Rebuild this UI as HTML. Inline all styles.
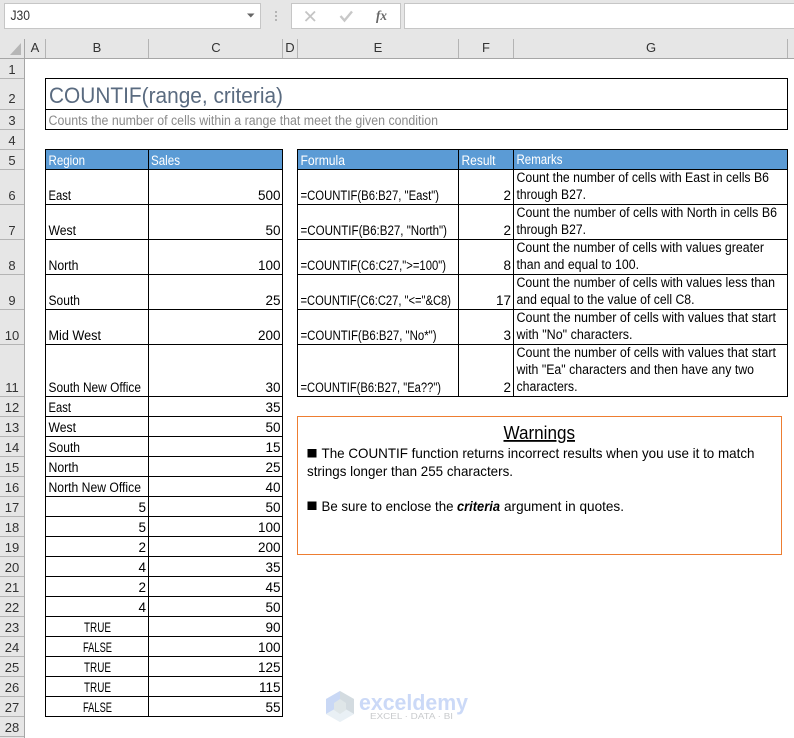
<!DOCTYPE html>
<html><head><meta charset="utf-8"><style>
html,body{margin:0;padding:0;background:#fff}
svg{display:block}
text{font-family:"Liberation Sans",sans-serif;font-size:13.5px;fill:#000}
.h text{fill:#333;font-size:13px}
.w text{fill:#fff}
</style></head><body>
<svg xmlns="http://www.w3.org/2000/svg" width="794" height="738" viewBox="0 0 794 738">
<rect width="794" height="738" fill="#fff"/>
<rect width="794" height="58" fill="#e6e6e6"/>
<rect y="58" width="24" height="680" fill="#e6e6e6"/>
<!-- top bars -->
<rect x="4.5" y="3.5" width="256" height="25" fill="#fff" stroke="#c6c6c6"/>
<text x="10.5" y="20" textLength="19.5" lengthAdjust="spacingAndGlyphs" style="fill:#333">J30</text>
<path d="M247 13.5h7.5l-3.7 4z" fill="#666"/>
<g fill="#b4b4b4"><rect x="275" y="11" width="2" height="2"/><rect x="275" y="15" width="2" height="2"/><rect x="275" y="19" width="2" height="2"/></g>
<rect x="291.5" y="3.5" width="109" height="25" fill="#fff" stroke="#c6c6c6"/>
<rect x="404.5" y="3.5" width="390" height="25" fill="#fff" stroke="#c6c6c6"/>
<path d="M305.5 11.500l9.500 9.500M315 11.500l-9.500 9.500" stroke="#c4c4c4" stroke-width="1.800" fill="none"/>
<path d="M340.500 16l4 4.500l7.500-9" stroke="#c8c8c8" stroke-width="2.400" fill="none"/>
<text x="376" y="20" textLength="11" lengthAdjust="spacingAndGlyphs" style="font-family:'Liberation Serif',serif;font-style:italic;font-weight:bold;font-size:14px;fill:#666">fx</text>
<!-- headers -->
<path d="M10 55h11V43z" fill="#b6b6b6"/>
<g stroke="#b4b4b4" stroke-width="1" fill="none">
<path d="M45.500 39v19M148.500 39v19M282.500 39v19M297.500 39v19M458.500 39v19M513.500 39v19M787.500 39v19"/>
<path d="M0 78.500h24M0 109.500h24M0 129.500h24M0 149.500h24M0 169.500h24M0 204.500h24M0 239.500h24M0 274.500h24M0 309.500h24M0 344.500h24M0 396.500h24M0 416.500h24M0 436.500h24M0 456.500h24M0 476.500h24M0 496.500h24M0 516.500h24M0 536.500h24M0 556.500h24M0 576.500h24M0 596.500h24M0 616.500h24M0 636.500h24M0 656.500h24M0 676.500h24M0 696.500h24M0 716.500h24M0 736.500h24"/>
</g>
<path d="M0 58.500h794M24.500 39v699" stroke="#a6a6a6" fill="none"/>
<g class="h" text-anchor="middle">
<text x="35" y="52">A</text><text x="97" y="52">B</text><text x="216" y="52">C</text><text x="290" y="52">D</text><text x="378" y="52">E</text><text x="486" y="52">F</text><text x="651" y="52">G</text>
<text x="12" y="74">1</text><text x="12" y="103">2</text><text x="12" y="125">3</text><text x="12" y="145">4</text><text x="12" y="165">5</text><text x="12" y="200">6</text><text x="12" y="235">7</text><text x="12" y="270">8</text><text x="12" y="305">9</text><text x="12" y="340">10</text><text x="12" y="392">11</text><text x="12" y="412">12</text><text x="12" y="432">13</text><text x="12" y="452">14</text><text x="12" y="472">15</text><text x="12" y="492">16</text><text x="12" y="512">17</text><text x="12" y="532">18</text><text x="12" y="552">19</text><text x="12" y="572">20</text><text x="12" y="592">21</text><text x="12" y="612">22</text><text x="12" y="632">23</text><text x="12" y="652">24</text><text x="12" y="672">25</text><text x="12" y="692">26</text><text x="12" y="712">27</text><text x="12" y="732">28</text>
</g>
<!-- title -->
<path d="M45.500 78.500h742v51h-742zM45.500 109.500h742" fill="none" stroke="#000"/>
<text x="49" y="103" textLength="234" lengthAdjust="spacingAndGlyphs" style="font-size:22.500px;fill:#5a6b80">COUNTIF(range, criteria)</text>
<text x="48.500" y="125" textLength="389.500" lengthAdjust="spacingAndGlyphs" style="fill:#8a8a8a">Counts the number of cells within a range that meet the given condition</text>
<!-- fills -->
<rect x="45" y="149" width="238" height="21" fill="#5b9bd5"/>
<rect x="297" y="149" width="491" height="21" fill="#5b9bd5"/>
<!-- table lines -->
<path d="M45.500 149.500h237v567h-237zM148.500 149.500v567M45.500 169.500h237M45.500 204.500h237M45.500 239.500h237M45.500 274.500h237M45.500 309.500h237M45.500 344.500h237M45.500 396.500h237M45.500 416.500h237M45.500 436.500h237M45.500 456.500h237M45.500 476.500h237M45.500 496.500h237M45.500 516.500h237M45.500 536.500h237M45.500 556.500h237M45.500 576.500h237M45.500 596.500h237M45.500 616.500h237M45.500 636.500h237M45.500 656.500h237M45.500 676.500h237M45.500 696.500h237" fill="none" stroke="#000"/>
<path d="M297.500 149.500h490v247h-490zM458.500 149.500v247M513.500 149.500v247M297.500 169.500h490M297.500 204.500h490M297.500 239.500h490M297.500 274.500h490M297.500 309.500h490M297.500 344.500h490" fill="none" stroke="#000"/>
<!-- header text -->
<g class="w">
<text x="48.500" y="165" textLength="36.500" lengthAdjust="spacingAndGlyphs">Region</text>
<text x="151" y="165" textLength="29" lengthAdjust="spacingAndGlyphs">Sales</text>
<text x="300.500" y="165" textLength="44.500" lengthAdjust="spacingAndGlyphs">Formula</text>
<text x="461.500" y="165" textLength="34" lengthAdjust="spacingAndGlyphs">Result</text>
<text x="516.500" y="164" textLength="46" lengthAdjust="spacingAndGlyphs">Remarks</text>
</g>
<!-- column B -->
<text x="48.500" y="200" textLength="22.500" lengthAdjust="spacingAndGlyphs">East</text>
<text x="48.500" y="235" textLength="27.500" lengthAdjust="spacingAndGlyphs">West</text>
<text x="48.500" y="270" textLength="30" lengthAdjust="spacingAndGlyphs">North</text>
<text x="48.500" y="305" textLength="31.500" lengthAdjust="spacingAndGlyphs">South</text>
<text x="48.500" y="340" textLength="52.500" lengthAdjust="spacingAndGlyphs">Mid West</text>
<text x="48.500" y="392" textLength="92.500" lengthAdjust="spacingAndGlyphs">South New Office</text>
<text x="48.500" y="412" textLength="22.500" lengthAdjust="spacingAndGlyphs">East</text>
<text x="48.500" y="432" textLength="27.500" lengthAdjust="spacingAndGlyphs">West</text>
<text x="48.500" y="452" textLength="31.500" lengthAdjust="spacingAndGlyphs">South</text>
<text x="48.500" y="472" textLength="30" lengthAdjust="spacingAndGlyphs">North</text>
<text x="48.500" y="492" textLength="92.500" lengthAdjust="spacingAndGlyphs">North New Office</text>
<g text-anchor="end">
<text x="146" y="512">5</text><text x="146" y="532">5</text><text x="146" y="552">2</text><text x="146" y="572">4</text><text x="146" y="592">2</text><text x="146" y="612">4</text>
</g>
<text x="84" y="632" textLength="27" lengthAdjust="spacingAndGlyphs">TRUE</text>
<text x="83" y="652" textLength="29" lengthAdjust="spacingAndGlyphs">FALSE</text>
<text x="84" y="672" textLength="27" lengthAdjust="spacingAndGlyphs">TRUE</text>
<text x="84" y="692" textLength="27" lengthAdjust="spacingAndGlyphs">TRUE</text>
<text x="83" y="712" textLength="29" lengthAdjust="spacingAndGlyphs">FALSE</text>
<!-- column C -->
<g text-anchor="end">
<text x="280.500" y="200">500</text><text x="280.500" y="235">50</text><text x="280.500" y="270">100</text><text x="280.500" y="305">25</text><text x="280.500" y="340">200</text><text x="280.500" y="392">30</text><text x="280.500" y="412">35</text><text x="280.500" y="432">50</text><text x="280.500" y="452">15</text><text x="280.500" y="472">25</text><text x="280.500" y="492">40</text><text x="280.500" y="512">50</text><text x="280.500" y="532">100</text><text x="280.500" y="552">200</text><text x="280.500" y="572">35</text><text x="280.500" y="592">45</text><text x="280.500" y="612">50</text><text x="280.500" y="632">90</text><text x="280.500" y="652">100</text><text x="280.500" y="672">125</text><text x="280.500" y="692">115</text><text x="280.500" y="712">55</text>
<text x="511" y="200">2</text><text x="511" y="235">2</text><text x="511" y="270">8</text><text x="511" y="305">17</text><text x="511" y="340">3</text><text x="511" y="392">2</text>
</g>
<!-- formulas -->
<text x="300.500" y="200" textLength="138.500" lengthAdjust="spacingAndGlyphs">=COUNTIF(B6:B27, "East")</text>
<text x="300.500" y="235" textLength="146.500" lengthAdjust="spacingAndGlyphs">=COUNTIF(B6:B27, "North")</text>
<text x="300.500" y="270" textLength="145.500" lengthAdjust="spacingAndGlyphs">=COUNTIF(C6:C27,"&gt;=100")</text>
<text x="300.500" y="305" textLength="150.500" lengthAdjust="spacingAndGlyphs">=COUNTIF(C6:C27, "&lt;="&amp;C8)</text>
<text x="300.500" y="340" textLength="136" lengthAdjust="spacingAndGlyphs">=COUNTIF(B6:B27, "No*")</text>
<text x="300.500" y="392" textLength="140.500" lengthAdjust="spacingAndGlyphs">=COUNTIF(B6:B27, "Ea??")</text>
<!-- remarks -->
<text x="516.500" y="182" textLength="252.500" lengthAdjust="spacingAndGlyphs">Count the number of cells with East in cells B6</text>
<text x="516.500" y="199" textLength="69.500" lengthAdjust="spacingAndGlyphs">through B27.</text>
<text x="516.500" y="217" textLength="260.500" lengthAdjust="spacingAndGlyphs">Count the number of cells with North in cells B6</text>
<text x="516.500" y="234" textLength="69.500" lengthAdjust="spacingAndGlyphs">through B27.</text>
<text x="516.500" y="252" textLength="247.500" lengthAdjust="spacingAndGlyphs">Count the number of cells with values greater</text>
<text x="516.500" y="269" textLength="122.500" lengthAdjust="spacingAndGlyphs">than and equal to 100.</text>
<text x="516.500" y="287" textLength="258.500" lengthAdjust="spacingAndGlyphs">Count the number of cells with values less than</text>
<text x="516.500" y="304" textLength="178" lengthAdjust="spacingAndGlyphs">and equal to the value of cell C8.</text>
<text x="516.500" y="322" textLength="259.500" lengthAdjust="spacingAndGlyphs">Count the number of cells with values that start</text>
<text x="516.500" y="339" textLength="116" lengthAdjust="spacingAndGlyphs">with "No" characters.</text>
<text x="516.500" y="357" textLength="259.500" lengthAdjust="spacingAndGlyphs">Count the number of cells with values that start</text>
<text x="516.500" y="374" textLength="237.500" lengthAdjust="spacingAndGlyphs">with "Ea" characters and then have any two</text>
<text x="516.500" y="391" textLength="61" lengthAdjust="spacingAndGlyphs">characters.</text>
<!-- warnings -->
<rect x="297.500" y="416.500" width="484" height="138" fill="#fff" stroke="#ed7d31"/>
<text x="503.500" y="439" textLength="71.500" lengthAdjust="spacingAndGlyphs" style="font-size:18px" text-decoration="underline">Warnings</text>
<rect x="307.500" y="449" width="9" height="8.500" fill="#000"/>
<text x="321.500" y="458" textLength="433" lengthAdjust="spacingAndGlyphs" style="font-size:14px">The COUNTIF function returns incorrect results when you use it to match</text>
<text x="307" y="476" textLength="206" lengthAdjust="spacingAndGlyphs" style="font-size:14px">strings longer than 255 characters.</text>
<rect x="307.500" y="501.500" width="9" height="8.500" fill="#000"/>
<text x="321.500" y="511" textLength="132" lengthAdjust="spacingAndGlyphs" style="font-size:14px">Be sure to enclose the</text>
<text x="457" y="511" textLength="43" lengthAdjust="spacingAndGlyphs" style="font-size:14px;font-weight:bold;font-style:italic">criteria</text>
<text x="504" y="511" textLength="120" lengthAdjust="spacingAndGlyphs" style="font-size:14px">argument in quotes.</text>
<!-- watermark -->
<path d="M340 691l14 8v15l-14 8-14-8v-15z" fill="#e9f0f6"/>
<path d="M340 691l-14 8v15l14-8z" fill="#c9d8f5"/>
<path d="M340 691l14 8v15l-14-8z" fill="#d3dbe0"/>
<path d="M326 714l14-8 14 8-14 8z" fill="#e9f0f5"/>
<path d="M334 703l6-4 6 4v7l-6 4-6-4z" fill="#dfe6e8"/>
<text x="359" y="710" textLength="109" lengthAdjust="spacingAndGlyphs" style="font-size:22px;font-weight:bold;fill:#cbd9f7">exceldemy</text>
<text x="370" y="719" textLength="83" lengthAdjust="spacingAndGlyphs" style="font-size:8px;fill:#c8cacc">EXCEL · DATA · BI</text>
</svg>
</body></html>
